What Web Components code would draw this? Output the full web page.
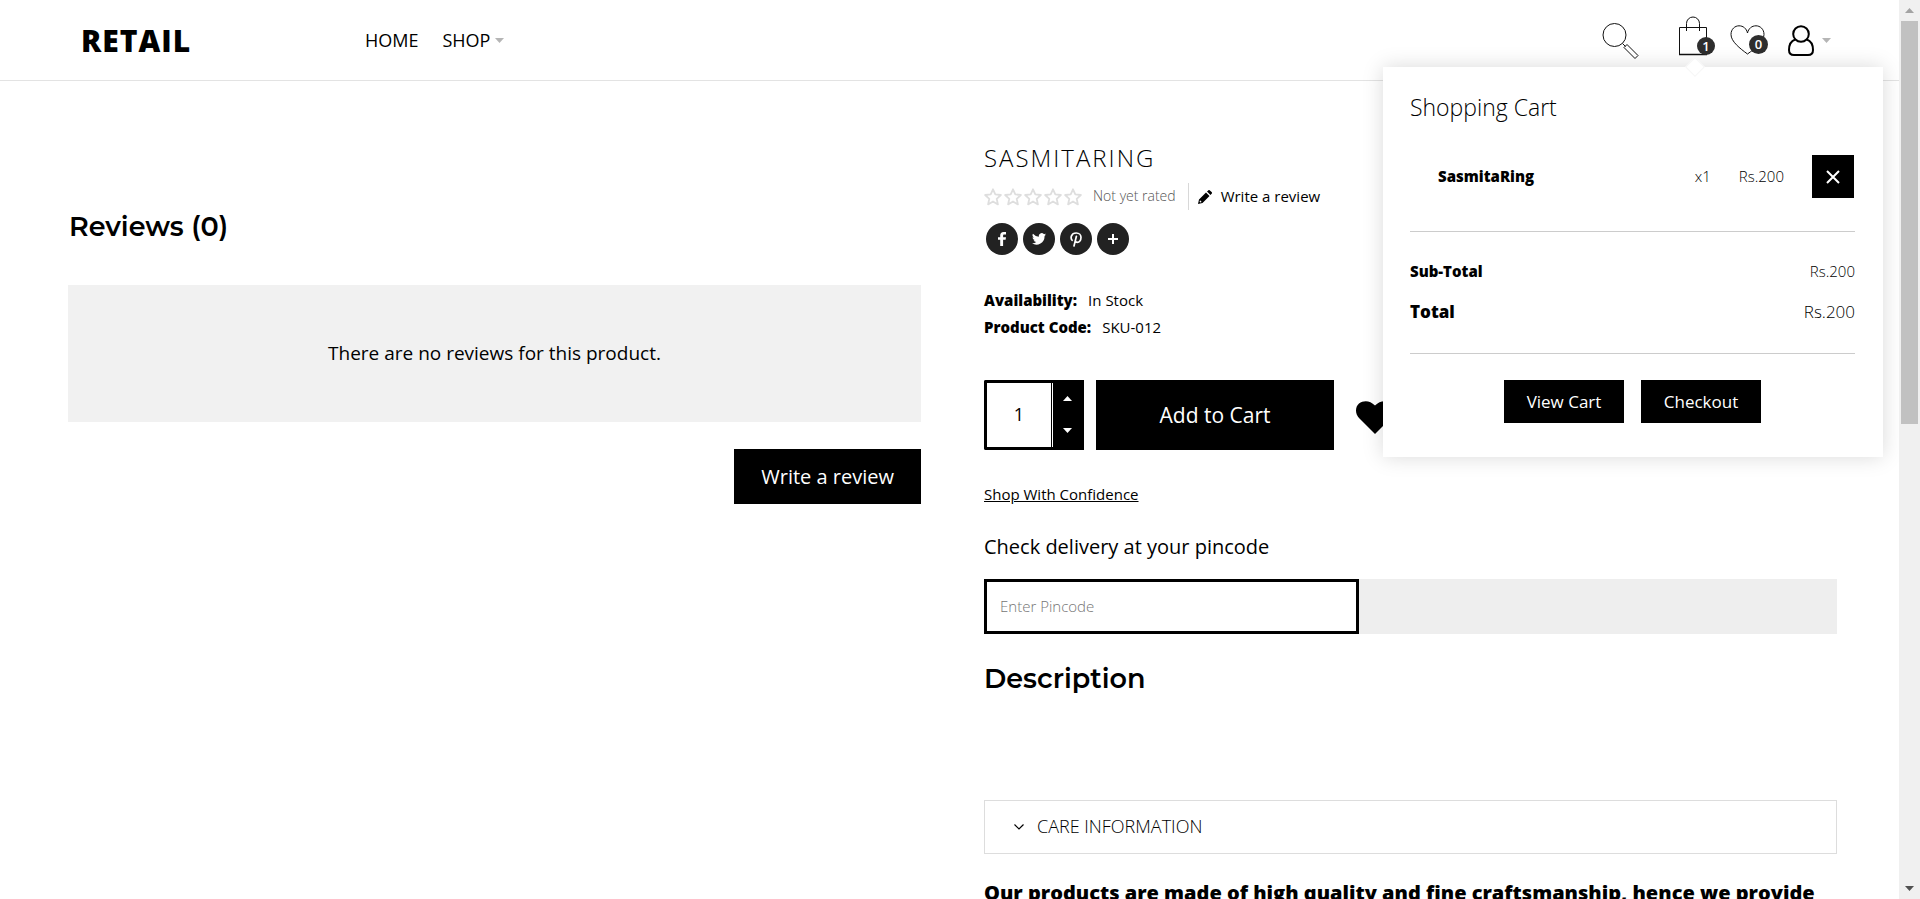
<!DOCTYPE html>
<html lang="en">
<head>
<meta charset="utf-8">
<meta name="viewport" content="width=device-width, initial-scale=1">
<title>SasmitaRing - Retail</title>
<style>
  html, body { margin: 0; height: 100%; }
  body { background: #fff; color: #000; font-family: "Open Sans", "Noto Sans", sans-serif; font-size: 15px; overflow: hidden; }
</style>
</head>
<body>
<store-page>
  <store-header slot="header"></store-header>
  <product-reviews count="0"></product-reviews>
  <product-detail></product-detail>
</store-page>

<script>
const define = (name, html, init) => {
  const template = document.createElement('template');
  template.innerHTML = `<style>
    * { box-sizing: border-box; }
    h1, h2, h3, p, dl, dd, ul { margin: 0; padding: 0; }
    a { color: inherit; text-decoration: none; }
    button, input { font: inherit; color: inherit; border: 0; border-radius: 0; margin: 0; padding: 0; outline: 0; }
    button { cursor: pointer; background: none; }
    svg { display: block; flex: none; }
  </style>` + html;
  customElements.define(name, class extends HTMLElement {
    constructor() {
      super();
      this.attachShadow({ mode: 'open' }).append(template.content.cloneNode(true));
    }
    connectedCallback() { if (init) init(this, this.shadowRoot); }
  });
};

define('store-page', `
  <style>
    :host { display: flex; height: 100vh; }
    .view { flex: 1; min-width: 0; overflow: hidden; }
    main { display: grid; grid-template-columns: 1fr 1fr; gap: 63px; padding: 59px 62px 40px 68px; align-items: start; }
  </style>
  <div class="view">
    <slot name="header"></slot>
    <main><slot></slot></main>
  </div>
  <scroll-track></scroll-track>`);

define('scroll-track', `
  <style>
    :host { display: flex; flex-direction: column; flex: none; width: 21px; background: #f0f0f0; align-items: center; }
    .cap { flex: none; height: 21px; display: grid; place-items: center; }
    .rail { flex: 1; width: 17px; }
    .thumb { height: 47%; background: #c1c1c1; }
  </style>
  <div class="cap"><svg width="9" height="5"><path d="M0 5 4.500 0 9 5z" fill="#a3a3a3"/></svg></div>
  <div class="rail"><div class="thumb"></div></div>
  <div class="cap"><svg width="9" height="5"><path d="M0 0h9L4.500 5z" fill="#505050"/></svg></div>`);

define('store-header', `
  <style>
    :host { display: block; position: relative; z-index: 2; background: #fff; border-bottom: 1px solid #e3e3e3; }
    header { display: flex; align-items: center; height: 80px; padding: 0 68px 0 81px; }
    .logo { width: 284px; padding-top: 2px; font-size: 30px; line-height: 40px; font-weight: 800; letter-spacing: 1px; }
    nav { display: flex; gap: 24px; font-size: 18px; line-height: 24px; font-weight: 400; flex: 1; }
    nav a { display: flex; align-items: center; gap: 5px; }
    .tools { display: flex; align-items: center; gap: 23px; }
    .tools button { position: relative; display: flex; align-items: center; gap: 8px; }
    .search { margin-right: 17px; padding-top: 2px; }
    .bag { padding-bottom: 9px; }
    .badge { position: absolute; min-width: 18px; height: 18px; border-radius: 9px; background: #2e2e2e; color: #fff; font-size: 13px; line-height: 18px; text-align: center; font-weight: 600; right: -8px; bottom: 10px; }
    .wish .badge { right: -3px; bottom: 1px; width: 19px; height: 19px; border-radius: 10px; }
    cart-panel { position: absolute; top: 67px; right: 16px; }
  </style>
  <header>
    <a class="logo" href="#">RETAIL</a>
    <nav aria-label="Main">
      <a href="#">HOME</a>
      <a href="#">SHOP <svg width="9" height="5"><path d="M0 0h9L4.500 5z" fill="#b5b5b5"/></svg></a>
    </nav>
    <div class="tools">
      <button class="search" aria-label="Search">
        <svg width="37" height="37" viewBox="0 0 37 37" fill="none" stroke="#111"><circle cx="12.500" cy="12" r="11.500"/><path d="M20.500 20.500 23.500 23.500M25 21.500 22 24.500 33 35.500 36 32.500z"/></svg>
      </button>
      <button class="bag" aria-label="Cart">
        <svg width="28" height="40" viewBox="0 0 28 40" fill="none" stroke="#111"><path d="M.5 11.500h27v27H.5zM7.500 15V7.500a6.500 6.500 0 0 1 13 0V15"/><path d="M0 38.500h28" stroke-width="1.500"/></svg>
        <span class="badge">1</span>
      </button>
      <button class="wish" aria-label="Wish list">
        <svg width="35" height="30" viewBox="0 0 35 30" fill="none" stroke="#111"><path d="M17.500 29C10 23.500 1 16.500 1 9.500 1 4 5 .8 9 .8c4.200 0 7.500 2.700 8.500 7.200C18.500 3.500 21.800.8 26 .8c4 0 8 3.200 8 8.700C34 16.500 25 23.500 17.500 29z"/></svg>
        <span class="badge">0</span>
      </button>
      <button class="user" aria-label="Account">
        <svg width="26" height="31" viewBox="0 0 26 31" fill="none" stroke="#000" stroke-width="2"><circle cx="13" cy="9" r="7.800"/><path d="M7.200 14.500C3 16 1 20 1 25c0 3.500 1.800 5 5 5h14c3.200 0 5-1.500 5-5 0-5-2-9-6.200-10.500"/></svg>
        <svg width="9" height="5"><path d="M0 0h9L4.500 5z" fill="#b5b5b5"/></svg>
      </button>
    </div>
  </header>
  <cart-panel></cart-panel>`);

define('cart-panel', `
  <style>
    :host { display: block; width: 500px; padding: 25px 28px 34px 27px; background: #fff; box-shadow: 0 0 20px rgba(0,0,0,.15); font-weight: 300; }
    :host::before { content: ""; position: absolute; top: -7px; left: 305px; width: 14px; height: 14px; background: #fff; border: 1px solid #f6f6f6; box-sizing: border-box; transform: rotate(45deg); }
    h2 { font-size: 23px; line-height: 30px; font-weight: 300; }
    .item { display: flex; align-items: center; margin-top: 33px; padding: 0 1px 33px 28px; border-bottom: 1px solid #ccc; }
    .item a { flex: 1; font-weight: 800; }
    .item a, .item span { line-height: 20px; padding-bottom: 2px; }
    .item span { margin-right: 28px; }
    .item button { width: 42px; height: 43px; background: #000; display: grid; place-items: center; }
    dl { display: grid; gap: 17px; padding: 27px 0 29px; border-bottom: 1px solid #ccc; }
    dl div { display: flex; justify-content: space-between; line-height: 24px; }
    dt { font-weight: 800; }
    .total { font-size: 17px; }
    .actions { display: flex; justify-content: center; gap: 17px; padding-top: 26px; }
    .actions a { width: 120px; background: #000; color: #fff; font-size: 17px; line-height: 43px; font-weight: 400; text-align: center; }
  </style>
  <h2>Shopping Cart</h2>
  <div class="item">
    <a href="#">SasmitaRing</a><span>x1</span><span>Rs.200</span>
    <button aria-label="Remove"><svg width="14" height="14" viewBox="0 0 14 14" stroke="#fff" stroke-width="2"><path d="M1 1 13 13M13 1 1 13"/></svg></button>
  </div>
  <dl>
    <div><dt>Sub-Total</dt><dd>Rs.200</dd></div>
    <div class="total"><dt>Total</dt><dd>Rs.200</dd></div>
  </dl>
  <div class="actions"><a href="#">View Cart</a><a href="#">Checkout</a></div>`);

define('section-heading', `
  <style>
    :host { display: block; }
    h2 { font-family: Montserrat, Inter, sans-serif; font-size: 27px; line-height: 36px; font-weight: 600; }
  </style>
  <h2><slot></slot></h2>`);

define('product-reviews', `
  <style>
    :host { display: flex; flex-direction: column; padding-top: 69px; }
    section-heading { padding-left: 1px; }
    p { margin: 40px 0 27px; padding: 55px 20px; background: #f1f1f1; text-align: center; font-size: 19px; line-height: 27px; font-weight: 400; }
    button { align-self: flex-end; padding: 0 27px; background: #000; color: #fff; font-size: 20px; line-height: 55px; }
  </style>
  <section-heading>Reviews (<span id="count"></span>)</section-heading>
  <p>There are no reviews for this product.</p>
  <button>Write a review</button>`,
  (el, root) => { root.getElementById('count').textContent = el.getAttribute('count'); });

define('star-rating', `
  <style>:host { display: flex; gap: 2px; }</style>`,
  (el, root) => {
    if (root.querySelector('svg')) return;
    root.innerHTML += Array(5).fill('<svg width="18" height="18" viewBox="0 0 18 18" fill="none" stroke="#dedede" stroke-width="1.800" stroke-linejoin="round"><path d="M9 1.300 11.300 6.400 16.900 7 12.700 10.800 13.900 16.400 9 13.500 4.100 16.400 5.300 10.800 1.100 7 6.700 6.400z"/></svg>').join('');
  });

define('share-links', `
  <style>
    :host { display: flex; gap: 5px; padding-left: 2px; }
    a { width: 32px; height: 32px; border-radius: 50%; background: #222; display: grid; place-items: center; }
  </style>
  <a href="#" aria-label="Facebook"><svg width="8" height="14" viewBox="0 0 8 14" fill="#fff"><path d="M2.200 14V7.800H0V5.200h2.200V3.600C2.200 1.300 3.400 0 5.600 0H8v2.500H6.300c-.9 0-1.200.4-1.200 1.200v1.500H8l-.4 2.600H5.100V14z"/></svg></a>
  <a href="#" aria-label="Twitter"><svg width="14" height="12" viewBox="0 0 24 20" fill="#fff"><path d="M24 2.400a10 10 0 0 1-2.800.8A5 5 0 0 0 23.300.4a10 10 0 0 1-3.100 1.200A4.900 4.900 0 0 0 11.800 6 14 14 0 0 1 1.700.9a4.900 4.900 0 0 0 1.500 6.600A5 5 0 0 1 1 6.900c0 2.400 1.600 4.400 3.900 4.900a5 5 0 0 1-2.200.1 4.900 4.900 0 0 0 4.600 3.400A9.900 9.900 0 0 1 0 17.300a14 14 0 0 0 21.500-12.400A10 10 0 0 0 24 2.400z"/></svg></a>
  <a href="#" aria-label="Pinterest"><svg width="12" height="15" viewBox="0 0 12 15" fill="none" stroke="#fff" stroke-width="1.700" stroke-linecap="round"><path d="M2.100 8.300C.3 6.200.9 1 6.200 1c3 0 4.800 2 4.800 4.300 0 3-1.700 5-3.700 5-1 0-1.800-.6-1.900-1.500M6.400 4.300 4 14"/></svg></a>
  <a href="#" aria-label="More"><svg width="10" height="10" viewBox="0 0 10 10" fill="#fff"><path d="M4 0h2v4h4v2H6v4H4V6H0V4h4z"/></svg></a>`);

define('quantity-stepper', `
  <style>
    :host { display: flex; width: 100px; height: 70px; background: #000; border: 3px solid #000; border-width: 3px 0 3px 3px; border-radius: 2px 0 0 2px; }
    input { flex: none; width: 64px; background: #fff; text-align: center; font-size: 18px; font-weight: 400; padding-bottom: 2px; }
    .steps { flex: 1; display: flex; flex-direction: column; margin-left: 1px; border-left: 1px solid #fff; padding: 0 2px 1px 0; }
    .steps button { flex: 1; display: grid; place-items: center; }
  </style>
  <input type="text" value="1" aria-label="Quantity">
  <div class="steps">
    <button aria-label="Increase"><svg width="9" height="5"><path d="M0 5 4.500 0 9 5z" fill="#fff"/></svg></button>
    <button aria-label="Decrease"><svg width="9" height="5"><path d="M0 0h9L4.500 5z" fill="#fff"/></svg></button>
  </div>`,
  (el, root) => {
    const input = root.querySelector('input');
    const [up, down] = root.querySelectorAll('button');
    up.onclick = () => { input.value = +input.value + 1; };
    down.onclick = () => { input.value = Math.max(1, input.value - 1); };
  });

define('pincode-check', `
  <style>
    :host { display: block; }
    label { display: block; font-size: 20px; line-height: 30px; font-weight: 400; }
    form { display: flex; margin-top: 17px; background: #eee; }
    input { width: 44%; height: 55px; border: 3px solid #000; background: #fff; padding: 0 13px 2px; }
    input::placeholder { color: #757575; opacity: 1; }
  </style>
  <label for="pin">Check delivery at your pincode</label>
  <form><input id="pin" type="text" placeholder="Enter Pincode"></form>`);

define('info-accordion', `
  <style>
    :host { display: block; border: 1px solid #ddd; }
    summary { display: flex; align-items: center; gap: 13px; height: 52px; padding: 0 29px; font-size: 18px; line-height: 24px; list-style: none; cursor: pointer; }
    ::slotted([slot="title"]) { padding-bottom: 2px; }
  </style>
  <details>
    <summary><svg width="10" height="6" viewBox="0 0 10 6" fill="none" stroke="#000" stroke-width="1.200"><path d="M.5.5 5 5 9.500.5"/></svg><slot name="title"></slot></summary>
    <slot></slot>
  </details>`);

define('product-detail', `
  <style>
    :host { display: block; font-weight: 300; }
    h1 { font-size: 24px; line-height: 36px; font-weight: 300; letter-spacing: 2px; }
    .rating { display: flex; align-items: center; height: 27px; margin-top: 7px; line-height: 25px; }
    .rating span { margin: 0 12px 2px 11px; color: #555; font-size: 14px; }
    .rating a { display: flex; align-items: center; gap: 9px; height: 27px; padding-left: 9px; border-left: 1px solid #d8d8d8; font-weight: 400; }
    share-links { margin-top: 13px; }
    .facts { margin-top: 32px; line-height: 27px; }
    .facts div { display: flex; gap: 11px; }
    .facts dd, .trust { font-weight: 400; }
    dt { font-weight: 800; }
    .buy { display: flex; align-items: center; margin-top: 39px; }
    .add { width: 238px; height: 70px; margin: 0 22px 0 12px; padding-bottom: 1px; background: #000; color: #fff; font-size: 21px; font-weight: 400; }
    .like { padding-top: 4px; }
    .trust { display: inline-block; margin-top: 32px; line-height: 24px; text-decoration: underline; }
    pincode-check { margin-top: 26px; }
    section-heading { margin-top: 27px; }
    info-accordion { margin-top: 103px; }
    .note { margin-top: 24px; font-size: 20px; line-height: 30px; font-weight: 800; }
  </style>
  <h1>SASMITARING</h1>
  <div class="rating">
    <star-rating></star-rating><span>Not yet rated</span>
    <a href="#"><svg width="14" height="14" viewBox="0 0 14 14"><path d="M0 14 1 9.500 8 2.500 11.500 6 4.500 13zM9 1.500 10.200.4a1.200 1.200 0 0 1 1.700 0l1.700 1.700a1.200 1.200 0 0 1 0 1.700L12.500 5z"/><path d="m2 10.300 1.700 1.700-1.500.4-.6-.6z" fill="#fff"/></svg>Write a review</a>
  </div>
  <share-links></share-links>
  <dl class="facts">
    <div><dt>Availability:</dt><dd>In Stock</dd></div>
    <div><dt>Product Code:</dt><dd>SKU-012</dd></div>
  </dl>
  <div class="buy">
    <quantity-stepper></quantity-stepper>
    <button class="add">Add to Cart</button>
    <button class="like" aria-label="Add to wish list"><svg width="38" height="33" viewBox="0 0 38 33"><path d="M19 33 3 17C-1 12.500-1 6 3 2.500 7.500-1 14-.8 19 4.500c5-5.300 11.500-5.500 16-2 4 3.500 4 10 0 14.500z"/></svg></button>
  </div>
  <a class="trust" href="#">Shop With Confidence</a>
  <pincode-check></pincode-check>
  <section-heading>Description</section-heading>
  <info-accordion><span slot="title">CARE INFORMATION</span></info-accordion>
  <p class="note">Our products are made of high quality and fine craftsmanship, hence we provide</p>`);
</script>
</body>
</html>
